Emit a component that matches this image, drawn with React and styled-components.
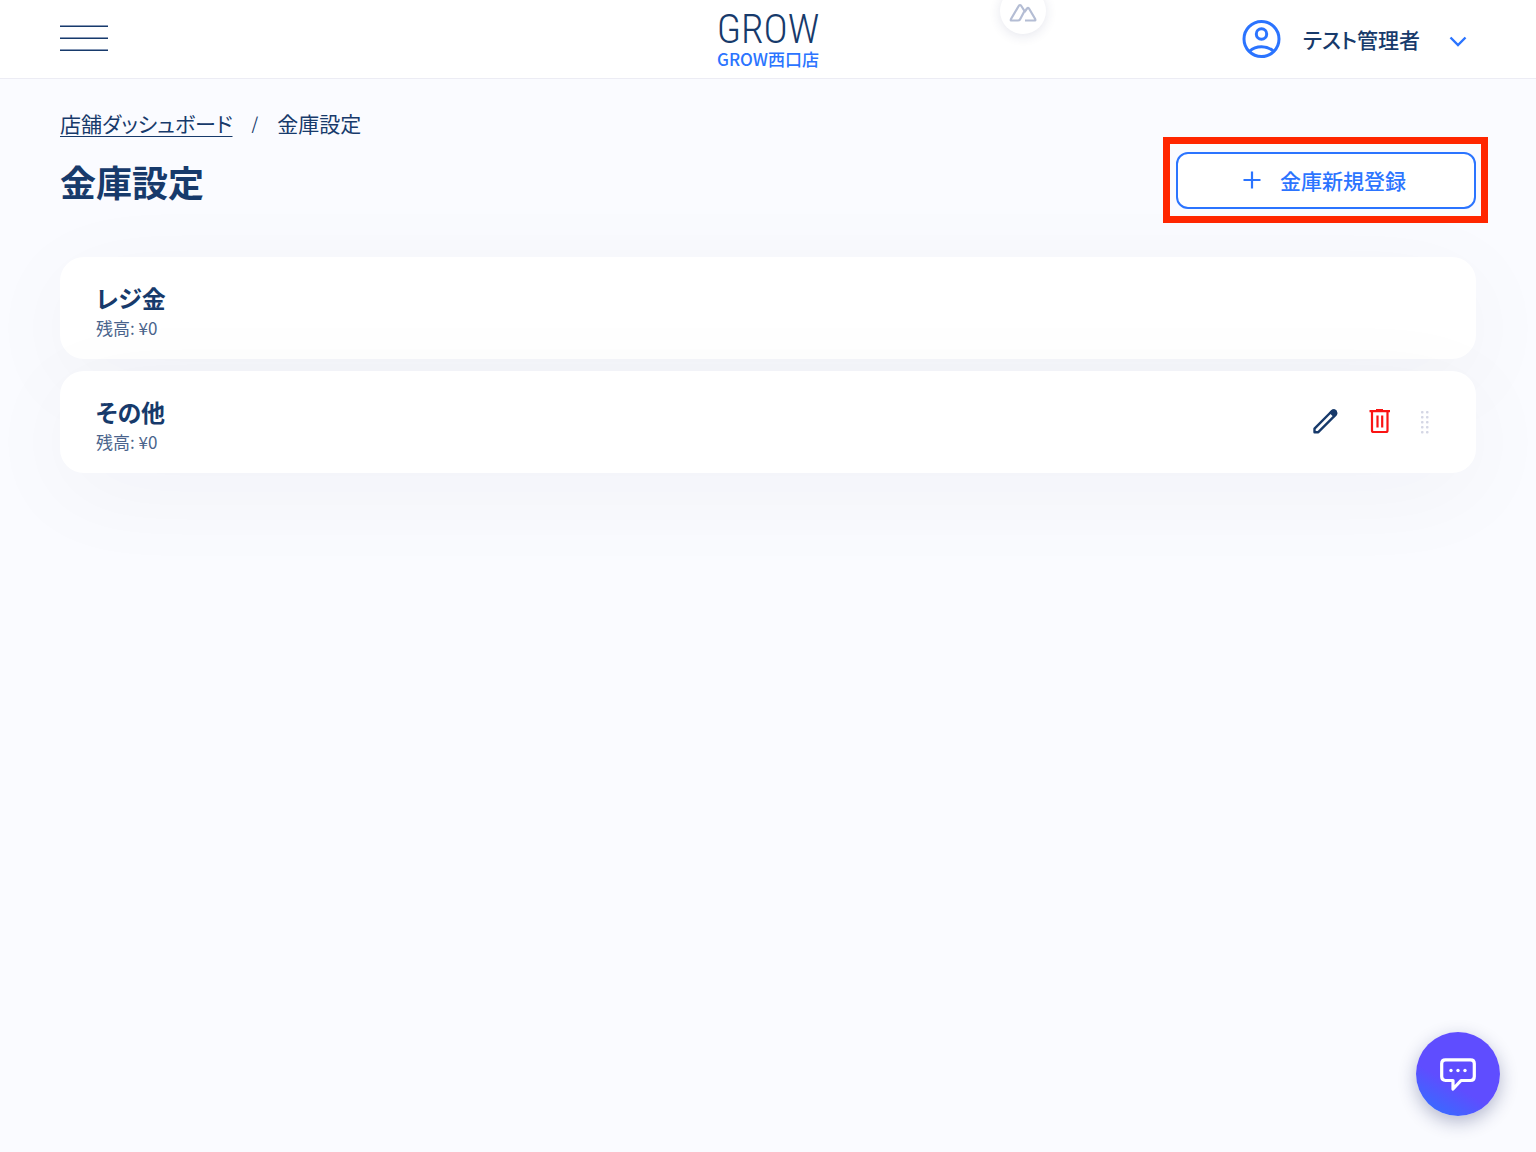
import React from "react";
import styled, { createGlobalStyle } from "styled-components";

const navy = "#173a6b";
const blue = "#2b74ff";

const GlobalStyle = createGlobalStyle`
  * { box-sizing: border-box; }
  body {
    margin: 0;
    min-height: 100vh;
    background: #fafbff;
    color: ${navy};
    font-family: "Noto Sans CJK JP", sans-serif;
    font-feature-settings: "palt";
  }
  button {
    padding: 0;
    border: 0;
    background: none;
    color: inherit;
    font: inherit;
    font-feature-settings: inherit;
    cursor: pointer;
  }
  h1, h2, p, ul, ol { margin: 0; padding: 0; }
  ul, ol { list-style: none; }
  svg { display: block; }
`;

const Header = styled.header`
  position: relative;
  display: grid;
  grid-template-columns: 1fr auto 1fr;
  align-items: center;
  height: 79px;
  padding: 0 60px;
  background: #fff;
  border-bottom: 1px solid #ececf4;
`;

const MenuButton = styled.button`
  display: grid;
  gap: 10px;
  width: 48px;
  padding-bottom: 2px;
`;

const MenuLine = styled.span`
  height: 2px;
  background: ${navy};
  border-top: 1px solid #8698b6;
`;

const Brand = styled.div`
  display: grid;
  justify-items: center;
  padding-bottom: 2px;
`;

const Logo = styled.span`
  font-family: "Roboto Condensed", Roboto, sans-serif;
  font-size: 41px;
  font-weight: 300;
  line-height: 42px;
`;

const StoreName = styled.span`
  color: ${blue};
  font-size: 17px;
  font-weight: 500;
  line-height: 18px;
`;

const AccountButton = styled.button`
  display: flex;
  align-items: center;
  justify-self: end;
  gap: 22px;
  padding-right: 9px;
  color: ${blue};
`;

const AccountName = styled.span`
  padding-right: 7px;
  color: ${navy};
  font-size: 21px;
  font-weight: 500;
  line-height: 30px;
`;

const TopBadge = styled.div`
  position: absolute;
  top: -12px;
  left: calc(50% + 232px);
  display: grid;
  place-items: center;
  width: 46px;
  height: 46px;
  padding-top: 4px;
  border-radius: 50%;
  background: #fff;
  box-shadow: 0 2px 12px rgba(40, 50, 110, 0.12);
`;

const Main = styled.main`
  padding: 29px 60px 60px;
`;

const Crumbs = styled.ol`
  display: flex;
  gap: 19px;
  font-size: 21px;
  line-height: 30px;
`;

const CrumbLink = styled.a`
  color: inherit;
  text-decoration: underline;
  text-decoration-thickness: 1px;
  text-underline-offset: 4px;
`;

const Separator = styled.li`
  font-size: 17px;
`;

const TitleRow = styled.div`
  display: flex;
  align-items: center;
  justify-content: space-between;
  padding-top: 13px;
`;

const Title = styled.h1`
  font-size: 36px;
  font-weight: 700;
  line-height: 60px;
`;

const Highlight = styled.div`
  position: relative;
  margin-bottom: 1px;
  &::after {
    content: "";
    position: absolute;
    inset: -15px -12px -14px -13px;
    border: 7px solid #ff2600;
    pointer-events: none;
  }
`;

const AddButton = styled.button`
  display: flex;
  align-items: center;
  justify-content: center;
  gap: 19px;
  width: 300px;
  height: 57px;
  padding: 0 3px 2px 0;
  border: 2px solid ${blue};
  border-radius: 12px;
  background: #fff;
  color: ${blue};
  font-size: 21px;
  font-weight: 500;
`;

const SafeList = styled.ul`
  display: grid;
  gap: 12px;
  padding-top: 46px;
`;

const SafeCard = styled.li`
  display: flex;
  align-items: center;
  justify-content: space-between;
  padding: 22px 46px 20px 36px;
  border-radius: 24px;
  background: #fff;
  box-shadow: 0 20px 100px rgba(10, 25, 60, 0.04);
`;

const SafeName = styled.h2`
  font-size: 24px;
  font-weight: 700;
  line-height: 38px;
`;

const Balance = styled.p`
  color: #4a648c;
  font-size: 17px;
  font-weight: 400;
  line-height: 22px;
`;

const Actions = styled.div`
  display: flex;
  align-items: center;
  gap: 30px;
  padding-bottom: 4px;
`;

const IconButton = styled.button`
  color: ${(p) => p.$color};
`;

const ChatButton = styled.button`
  position: fixed;
  right: 36px;
  bottom: 36px;
  display: grid;
  place-items: center;
  width: 84px;
  height: 84px;
  border-radius: 50%;
  background: linear-gradient(210deg, #5f4dff 60%, #2b74ff 100%);
  box-shadow: 0 6px 18px rgba(20, 30, 90, 0.3);
  color: #fff;
`;

const PersonIcon = () => (
  <svg width="39" height="39" viewBox="0 0 39 39" fill="none" stroke="currentColor" strokeWidth="3" aria-hidden="true">
    <circle cx="19.5" cy="19" r="17.5" />
    <circle cx="19.5" cy="14" r="5.2" />
    <path d="M7.5 31.3C14 25.3 25 25.3 31.5 31.3" />
  </svg>
);

const ChevronIcon = () => (
  <svg width="18" height="16" viewBox="0 0 18 16" fill="none" stroke="currentColor" strokeWidth="2.4" aria-hidden="true">
    <path d="M1.5 6.5L9 14L16.5 6.5" />
  </svg>
);

const MountainIcon = () => (
  <svg width="28" height="20" viewBox="0 0 28 20" fill="none" stroke="#b4bdd4" strokeWidth="2.2" strokeLinejoin="round" aria-hidden="true">
    <path d="M9 17.5H2Q1.5 17.5 2 16L10 2.5Q11 1.5 12 2.5L15.5 8L11 16.5Q10.3 17.5 9 17.5Z" />
    <path d="M16 17.5H26Q26.7 17.5 26.2 16L20 5.5Q19 4.5 18 5.5L15.5 9" />
  </svg>
);

const PlusIcon = () => (
  <svg width="18" height="18" viewBox="0 0 18 18" stroke="currentColor" strokeWidth="2.2" aria-hidden="true">
    <path d="M9 0.5V17.5M0.5 9H17.5" />
  </svg>
);

const PencilIcon = () => (
  <svg width="26" height="26" viewBox="0 0 26 26" fill="none" stroke="currentColor" strokeWidth="2.4" strokeLinejoin="round" aria-hidden="true">
    <path d="M2.5 24.2V20.7L19.5 3.5Q21.5 1.8 23.3 3.2Q25 5.2 23.3 7.2L6.3 24.2Z" />
    <path d="M17 4.500L20 1.800Q22 0.700 24.400 2.200Q25.800 4.500 24.700 6.800L22 9.500Z" fill="currentColor" stroke="none" />
  </svg>
);

const TrashIcon = () => (
  <svg width="22" height="26" viewBox="0 0 22 26" fill="none" stroke="currentColor" strokeWidth="2.2" aria-hidden="true">
    <path d="M1.500 3.200H22M8 2H15M4 3V22.500Q4 24 5.500 24H18Q19.500 24 19.500 22.500V3M9.500 7.500V19.500M14.200 7.500V19.500" />
  </svg>
);

const GripIcon = () => (
  <svg width="10" height="26" viewBox="0 0 10 26" fill="currentColor" aria-hidden="true">
    {[4, 9, 14, 19, 24].map((y) => (
      <React.Fragment key={y}>
        <rect x="1" y={y - 1} width="2.5" height="2.5" rx="0.8" />
        <rect x="6" y={y - 1} width="2.5" height="2.5" rx="0.8" />
      </React.Fragment>
    ))}
  </svg>
);

const ChatIcon = () => (
  <svg width="36" height="36" viewBox="0 0 36 36" fill="none" stroke="currentColor" strokeWidth="3.2" strokeLinejoin="round" aria-hidden="true">
    <path d="M5.5 3.8H30.5Q34.3 3.800 34.3 7.500V20.500Q34.300 24.500 30.500 24.500H21L13 33V24.500H5.500Q1.700 24.500 1.700 20.500V7.500Q1.700 3.800 5.500 3.800Z" />
    <g fill="currentColor" stroke="none">
      <circle cx="11" cy="14.5" r="1.7" />
      <circle cx="18" cy="14.5" r="1.7" />
      <circle cx="25" cy="14.5" r="1.7" />
    </g>
  </svg>
);

const safes = [
  { name: "レジ金", balance: "¥0", editable: false },
  { name: "その他", balance: "¥0", editable: true },
];

export default function App() {
  return (
    <>
      <GlobalStyle />
      <Header>
        <MenuButton type="button" aria-label="メニュー">
          <MenuLine />
          <MenuLine />
          <MenuLine />
        </MenuButton>
        <Brand>
          <Logo>GROW</Logo>
          <StoreName>GROW西口店</StoreName>
        </Brand>
        <AccountButton type="button">
          <PersonIcon />
          <AccountName>テスト管理者</AccountName>
          <ChevronIcon />
        </AccountButton>
        <TopBadge>
          <MountainIcon />
        </TopBadge>
      </Header>
      <Main>
        <nav>
          <Crumbs>
            <li>
              <CrumbLink href="#dashboard">店舗ダッシュボード</CrumbLink>
            </li>
            <Separator>/</Separator>
            <li>金庫設定</li>
          </Crumbs>
        </nav>
        <TitleRow>
          <Title>金庫設定</Title>
          <Highlight>
            <AddButton type="button">
              <PlusIcon />
              金庫新規登録
            </AddButton>
          </Highlight>
        </TitleRow>
        <SafeList>
          {safes.map((safe) => (
            <SafeCard key={safe.name}>
              <div>
                <SafeName>{safe.name}</SafeName>
                <Balance>残高: {safe.balance}</Balance>
              </div>
              {safe.editable && (
                <Actions>
                  <IconButton type="button" aria-label="編集" $color={navy}>
                    <PencilIcon />
                  </IconButton>
                  <IconButton type="button" aria-label="削除" $color="#fa1414">
                    <TrashIcon />
                  </IconButton>
                  <IconButton type="button" aria-label="並び替え" $color="#d5d7e5">
                    <GripIcon />
                  </IconButton>
                </Actions>
              )}
            </SafeCard>
          ))}
        </SafeList>
      </Main>
      <ChatButton type="button" aria-label="チャット">
        <ChatIcon />
      </ChatButton>
    </>
  );
}
